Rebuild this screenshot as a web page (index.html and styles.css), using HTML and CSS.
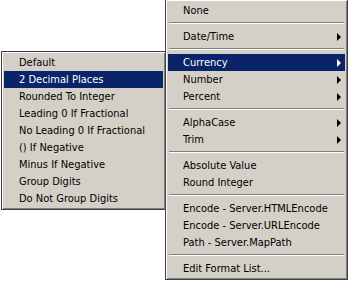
FILE: index.html
```html
<!DOCTYPE html>
<html lang="en">
<head>
    <meta charset="UTF-8">
    <title>Format menu</title>
    <link rel="stylesheet" href="styles.css">
</head>
<body>
    <div class="menu main-menu">
        <div class="item">None</div>
        <div class="sep"></div>
        <div class="item sub">Date/Time</div>
        <div class="sep"></div>
        <div class="item sub active">Currency</div>
        <div class="item sub">Number</div>
        <div class="item sub">Percent</div>
        <div class="sep"></div>
        <div class="item sub">AlphaCase</div>
        <div class="item sub">Trim</div>
        <div class="sep"></div>
        <div class="item">Absolute Value</div>
        <div class="item">Round Integer</div>
        <div class="sep"></div>
        <div class="item">Encode - Server.HTMLEncode</div>
        <div class="item">Encode - Server.URLEncode</div>
        <div class="item">Path - Server.MapPath</div>
        <div class="sep"></div>
        <div class="item">Edit Format List...</div>
    </div>

    <div class="menu submenu">
        <div class="item">Default</div>
        <div class="item active">2 Decimal Places</div>
        <div class="item">Rounded To Integer</div>
        <div class="item">Leading 0 If Fractional</div>
        <div class="item">No Leading 0 If Fractional</div>
        <div class="item">() If Negative</div>
        <div class="item">Minus If Negative</div>
        <div class="item">Group Digits</div>
        <div class="item">Do Not Group Digits</div>
    </div>
</body>
</html>
```

FILE: styles.css
```css
body {
    margin: 0;
    background: #fff;
    font-family: Tahoma, "DejaVu Sans Condensed", "Liberation Sans", sans-serif;
    font-size: 11px;
    color: #000;
}
.menu {
    background: #d4d0c8;
    border: 1px solid #404040;
    border-top-color: #d4d0c8;
    border-left-color: #404040;
    box-shadow: inset 1px 1px 0 #fff, inset -1px -1px 0 #808080;
    padding: 2px;
    box-sizing: border-box;
}
.main-menu {
    width: 183px;
    margin-left: 165px;
    margin-top: -1px;
    border-top-color: #404040;
}
.submenu {
    position: absolute;
    left: 1px;
    top: 51px;
    width: 165px;
    border-top-color: #404040;
    z-index: 2;
}
.item {
    display: flex;
    align-items: center;
    height: 17px;
    padding: 0 4px 0 15px;
    white-space: nowrap;
}
.item.sub::after {
    content: "";
    margin-left: auto;
    border-left: 4px solid #000;
    border-top: 4px solid transparent;
    border-bottom: 4px solid transparent;
}
.item.active {
    background: #0a246a;
    color: #fff;
}
.item.sub.active::after {
    border-left-color: #fff;
}
.sep {
    margin: 3px 1px 4px;
    border-top: 1px solid #808080;
    border-bottom: 1px solid #fff;
}
```
